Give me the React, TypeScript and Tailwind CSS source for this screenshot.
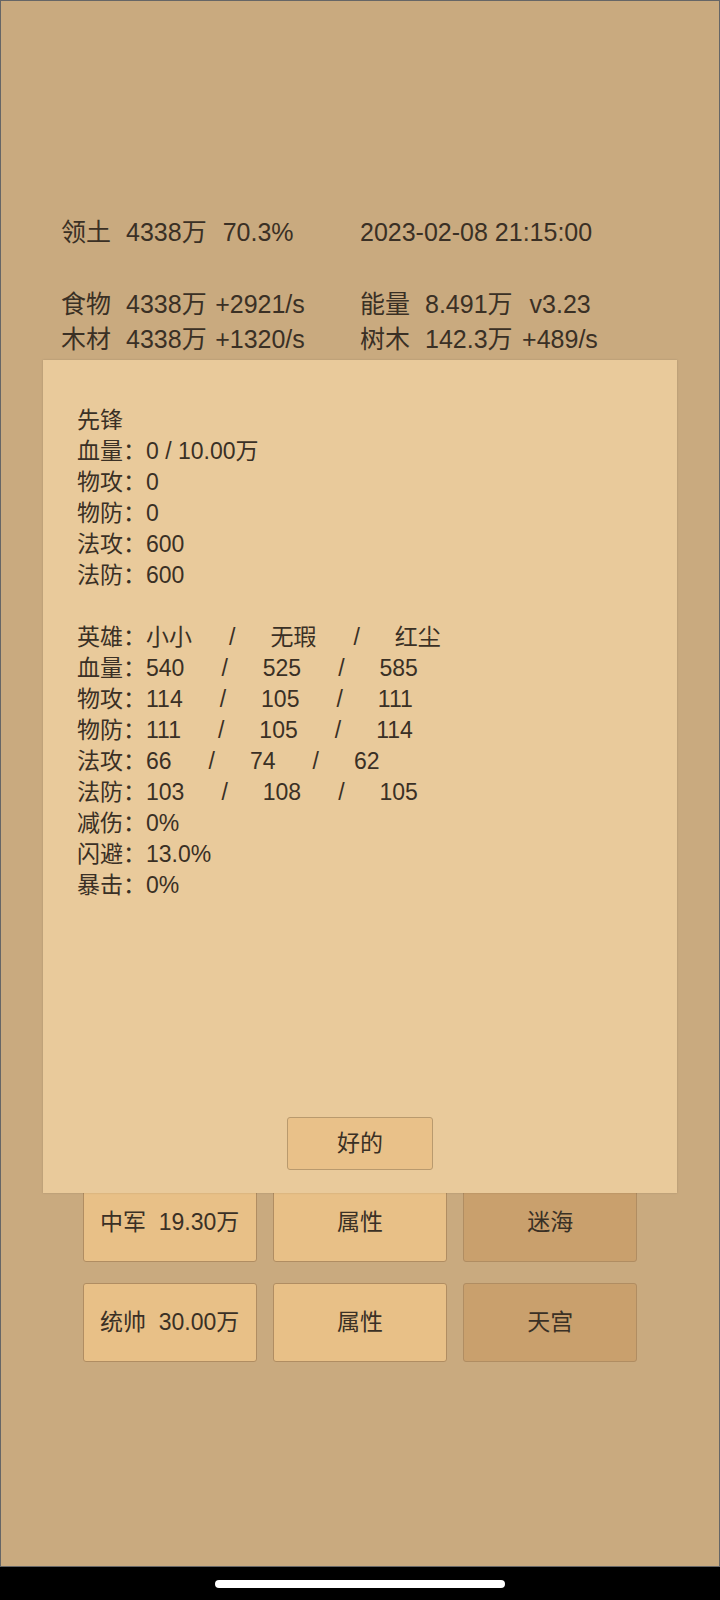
import React from "react";

const FONT = '"Liberation Sans", "Noto Sans CJK SC", sans-serif';

function Spacer({ w }: { w: number }) {
  return <span className="inline-block" style={{ width: w }} />;
}

function HeroRow({ label, vals }: { label: string; vals: string[] }) {
  return (
    <div className="whitespace-pre">
      {label}：{vals[0]}
      <Spacer w={37} />/<Spacer w={35} />
      {vals[1]}
      <Spacer w={37} />/<Spacer w={35} />
      {vals[2]}
    </div>
  );
}

function StatLine({ label, value, extra, gap }: { label: string; value: string; extra: string; gap: number }) {
  return (
    <div className="whitespace-pre">
      {label}
      <Spacer w={15} />
      {value}
      <Spacer w={gap} />
      {extra}
    </div>
  );
}

function GridButton({ text, dark }: { text: string; dark?: boolean }) {
  return (
    <div
      className={
        "h-[79px] flex items-center justify-center rounded-[3px] border border-[#b08d62] text-[23px] whitespace-pre " +
        (dark ? "bg-[#c9a06d]" : "bg-[#e8c087]")
      }
    >
      {text}
    </div>
  );
}

export default function App() {
  return (
    <div
      className="w-[720px] h-[1600px] bg-black flex flex-col text-[#3a3025]"
      style={{ fontFamily: FONT }}
    >
      <div className="relative h-[1567px] bg-[#c9aa7f] border border-[#666666]">
        <div className="pt-[214px] pl-[60px] text-[25px] leading-[35.75px]">
          <div className="grid grid-cols-[299px_1fr]">
            <StatLine label="领土" value="4338万" extra="70.3%" gap={16} />
            <div className="whitespace-pre">2023-02-08 21:15:00</div>
            <div>&nbsp;</div>
            <div>&nbsp;</div>
            <StatLine label="食物" value="4338万" extra="+2921/s" gap={8.5} />
            <StatLine label="能量" value="8.491万" extra="v3.23" gap={17} />
            <StatLine label="木材" value="4338万" extra="+1320/s" gap={8.5} />
            <StatLine label="树木" value="142.3万" extra="+489/s" gap={9.5} />
          </div>
        </div>

        <div className="mt-[825px] mx-auto w-[555px] grid grid-cols-3 gap-x-4 gap-y-[21px]">
          <GridButton text="中军  19.30万" />
          <GridButton text="属性" />
          <GridButton text="迷海" dark />
          <GridButton text="统帅  30.00万" />
          <GridButton text="属性" />
          <GridButton text="天宫" dark />
        </div>

        <div className="absolute left-[42px] top-[359px] w-[634px] h-[833px] bg-[#e9ca9b] flex flex-col pt-[45px] pl-[34px] pb-[23px] text-[23px] leading-[31px] shadow-[0_0_2px_rgba(0,0,0,0.15)]">
          <div className="whitespace-pre">
            <div>先锋</div>
            <div>血量：0 / 10.00万</div>
            <div>物攻：0</div>
            <div>物防：0</div>
            <div>法攻：600</div>
            <div>法防：600</div>
            <div>&nbsp;</div>
            <HeroRow label="英雄" vals={["小小", "无瑕", "红尘"]} />
            <HeroRow label="血量" vals={["540", "525", "585"]} />
            <HeroRow label="物攻" vals={["114", "105", "111"]} />
            <HeroRow label="物防" vals={["111", "105", "114"]} />
            <HeroRow label="法攻" vals={["66", "74", "62"]} />
            <HeroRow label="法防" vals={["103", "108", "105"]} />
            <div>减伤：0%</div>
            <div>闪避：13.0%</div>
            <div>暴击：0%</div>
          </div>
          <div className="mt-auto -ml-[34px] flex justify-center">
            <div className="w-[146px] h-[53px] flex items-center justify-center rounded-[3px] border border-[#b99a6e] bg-[#e9c189] text-[23px]">
              好的
            </div>
          </div>
        </div>
      </div>
      <div className="flex-1 flex items-center justify-center">
        <div className="w-[290px] h-[8px] rounded-full bg-white" />
      </div>
    </div>
  );
}
